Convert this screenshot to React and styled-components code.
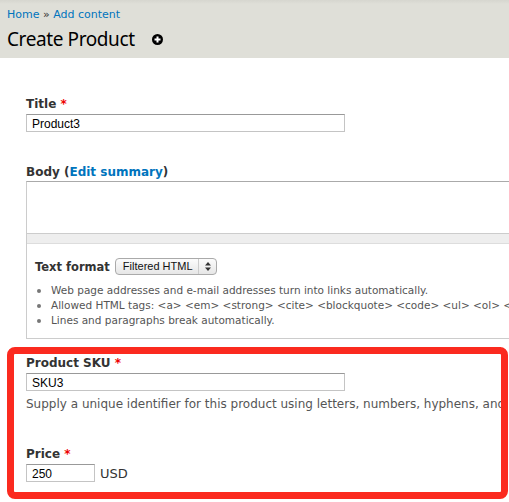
import React from "react";
import styled, { createGlobalStyle } from "styled-components";

const GlobalStyle = createGlobalStyle`
    html, body {
        margin: 0;
        padding: 0;
        background: #fff;
        overflow: hidden;
    }
    body {
        font-family: "DejaVu Sans", "Lucida Grande", Verdana, sans-serif;
        color: #333;
    }
`;

const Page = styled.div`
    width: 900px;
`;

const Header = styled.div`
    height: 58px;
    box-sizing: border-box;
    padding: 8px 7px 0;
    background: linear-gradient(#d6d6cf 0, #dfdfd8 4px, #dfdfd8 100%);
`;

const Breadcrumb = styled.div`
    font-size: 11px;
    line-height: 14px;
    color: #333;
`;

const Link = styled.a`
    color: #0074bd;
    text-decoration: none;
    font-weight: ${props => props.bold ? "bold" : "normal"};
`;

const TitleRow = styled.div`
    display: flex;
    align-items: center;
    margin-top: 5px;
    gap: 17px;
`;

const PageTitle = styled.h1`
    margin: 0;
    font-family: "Noto Sans", "DejaVu Sans", sans-serif;
    font-size: 19px;
    letter-spacing: -0.4px;
    font-weight: normal;
    color: #000;
    line-height: 24px;
`;

const Content = styled.div`
    padding: 38px 0 0 26px;
`;

const FormItem = styled.div`
    margin-bottom: ${props => props.gap || 0}px;
`;

const Label = styled.label`
    display: block;
    font-size: 12px;
    font-weight: bold;
    color: #333;
    line-height: 16px;
    margin-bottom: ${props => props.tight ? 1 : 2}px;
`;

const Required = styled.span`
    color: #e00;
`;

const TextInput = styled.input`
    display: block;
    box-sizing: border-box;
    width: ${props => props.w}px;
    height: 18px;
    padding: 1px 5px 0;
    border: 1px solid #c4c4c4;
    border-top-color: #999;
    font-family: "Liberation Sans", Arial, sans-serif;
    font-size: 12px;
    color: #000;
    background: #fff;
    outline: none;
`;

const BodyBox = styled.div`
    border: 1px solid #ccc;
    border-top-color: #aaa;
    border-right: none;
`;

const TextArea = styled.div`
    height: 51px;
    background: #fff;
`;

const Grip = styled.div`
    height: 9px;
    background: #eee;
    border-top: 1px solid #ccc;
    border-bottom: 1px solid #ddd;
`;

const FilterWrapper = styled.div`
    padding: 14px 8px 10px;
`;

const FormatRow = styled.div`
    display: flex;
    align-items: center;
    gap: 5px;
`;

const FormatLabel = styled.span`
    font-size: 11.5px;
    font-weight: bold;
    color: #333;
`;

const Select = styled.div`
    display: flex;
    align-items: center;
    height: 17px;
    box-sizing: border-box;
    border: 1px solid #aaa;
    border-radius: 4px;
    background: linear-gradient(#fcfcfc, #e6e6e6);
    font-family: "Liberation Sans", Arial, sans-serif;
    font-size: 11px;
    color: #111;
`;

const SelectText = styled.span`
    padding: 0 5px 0 7px;
    border-right: 1px solid #ccc;
    line-height: 15px;
`;

const SelectArrows = styled.span`
    display: flex;
    align-items: center;
    padding: 0 5px 0 6px;
`;

const Tips = styled.ul`
    margin: 8px 0 0;
    padding: 0 0 0 14px;
    list-style: none;
`;

const Tip = styled.li`
    position: relative;
    font-size: 10.5px;
    line-height: 15px;
    color: #555;
    padding-left: 2px;
    white-space: nowrap;
    &::before {
        content: "";
        position: absolute;
        left: -12px;
        top: 6px;
        width: 4px;
        height: 4px;
        border-radius: 50%;
        background: #777;
    }
`;

const Highlight = styled.div`
    width: 501px;
    height: 152px;
    box-sizing: border-box;
    margin: 8px 0 0 -19px;
    border: 7px solid #fb2a1f;
    border-radius: 8px;
    padding: 1px 0 0 12px;
    overflow: hidden;
    background: #fff;
`;

const Description = styled.div`
    font-size: 12px;
    line-height: 16px;
    color: #555;
    white-space: nowrap;
    margin-top: 5px;
`;

const InlineRow = styled.div`
    display: flex;
    align-items: center;
    gap: 5px;
`;

const Unit = styled.span`
    font-size: 13px;
    color: #333;
`;

function PlusIcon() {
    return (
        <svg width="11" height="11" viewBox="0 0 11 11">
            <circle cx="5.5" cy="5.5" r="5.5" fill="#000" />
            <rect x="2.5" y="4.5" width="6" height="2" fill="#fff" />
            <rect x="4.5" y="2.5" width="2" height="6" fill="#fff" />
        </svg>
    );
}

function UpDown() {
    return (
        <svg width="6" height="9" viewBox="0 0 6 9">
            <path d="M3 0 L6 3.5 L0 3.5 Z" fill="#333" />
            <path d="M3 9 L6 5.5 L0 5.5 Z" fill="#333" />
        </svg>
    );
}

export default function App() {
    return (
        <Page>
            <GlobalStyle />
            <Header>
                <Breadcrumb>
                    <Link href="#">Home</Link> » <Link href="#">Add content</Link>
                </Breadcrumb>
                <TitleRow>
                    <PageTitle>Create Product</PageTitle>
                    <PlusIcon />
                </TitleRow>
            </Header>
            <Content>
                <FormItem gap={32}>
                    <Label>Title <Required>*</Required></Label>
                    <TextInput w={319} defaultValue="Product3" />
                </FormItem>
                <FormItem>
                    <Label tight>Body (<Link href="#" bold>Edit summary</Link>)</Label>
                    <BodyBox>
                        <TextArea />
                        <Grip />
                        <FilterWrapper>
                            <FormatRow>
                                <FormatLabel>Text format</FormatLabel>
                                <Select>
                                    <SelectText>Filtered HTML</SelectText>
                                    <SelectArrows><UpDown /></SelectArrows>
                                </Select>
                            </FormatRow>
                            <Tips>
                                <Tip>Web page addresses and e-mail addresses turn into links automatically.</Tip>
                                <Tip>Allowed HTML tags: &lt;a&gt; &lt;em&gt; &lt;strong&gt; &lt;cite&gt; &lt;blockquote&gt; &lt;code&gt; &lt;ul&gt; &lt;ol&gt; &lt;li&gt; &lt;dl&gt; &lt;dt&gt; &lt;dd&gt;</Tip>
                                <Tip>Lines and paragraphs break automatically.</Tip>
                            </Tips>
                        </FilterWrapper>
                    </BodyBox>
                </FormItem>
                <Highlight>
                    <FormItem gap={34}>
                        <Label>Product SKU <Required>*</Required></Label>
                        <TextInput w={319} defaultValue="SKU3" />
                        <Description>Supply a unique identifier for this product using letters, numbers, hyphens, and underscores. Commas may not be used.</Description>
                    </FormItem>
                    <FormItem>
                        <Label>Price <Required>*</Required></Label>
                        <InlineRow>
                            <TextInput w={69} defaultValue="250" />
                            <Unit>USD</Unit>
                        </InlineRow>
                    </FormItem>
                </Highlight>
            </Content>
        </Page>
    );
}
